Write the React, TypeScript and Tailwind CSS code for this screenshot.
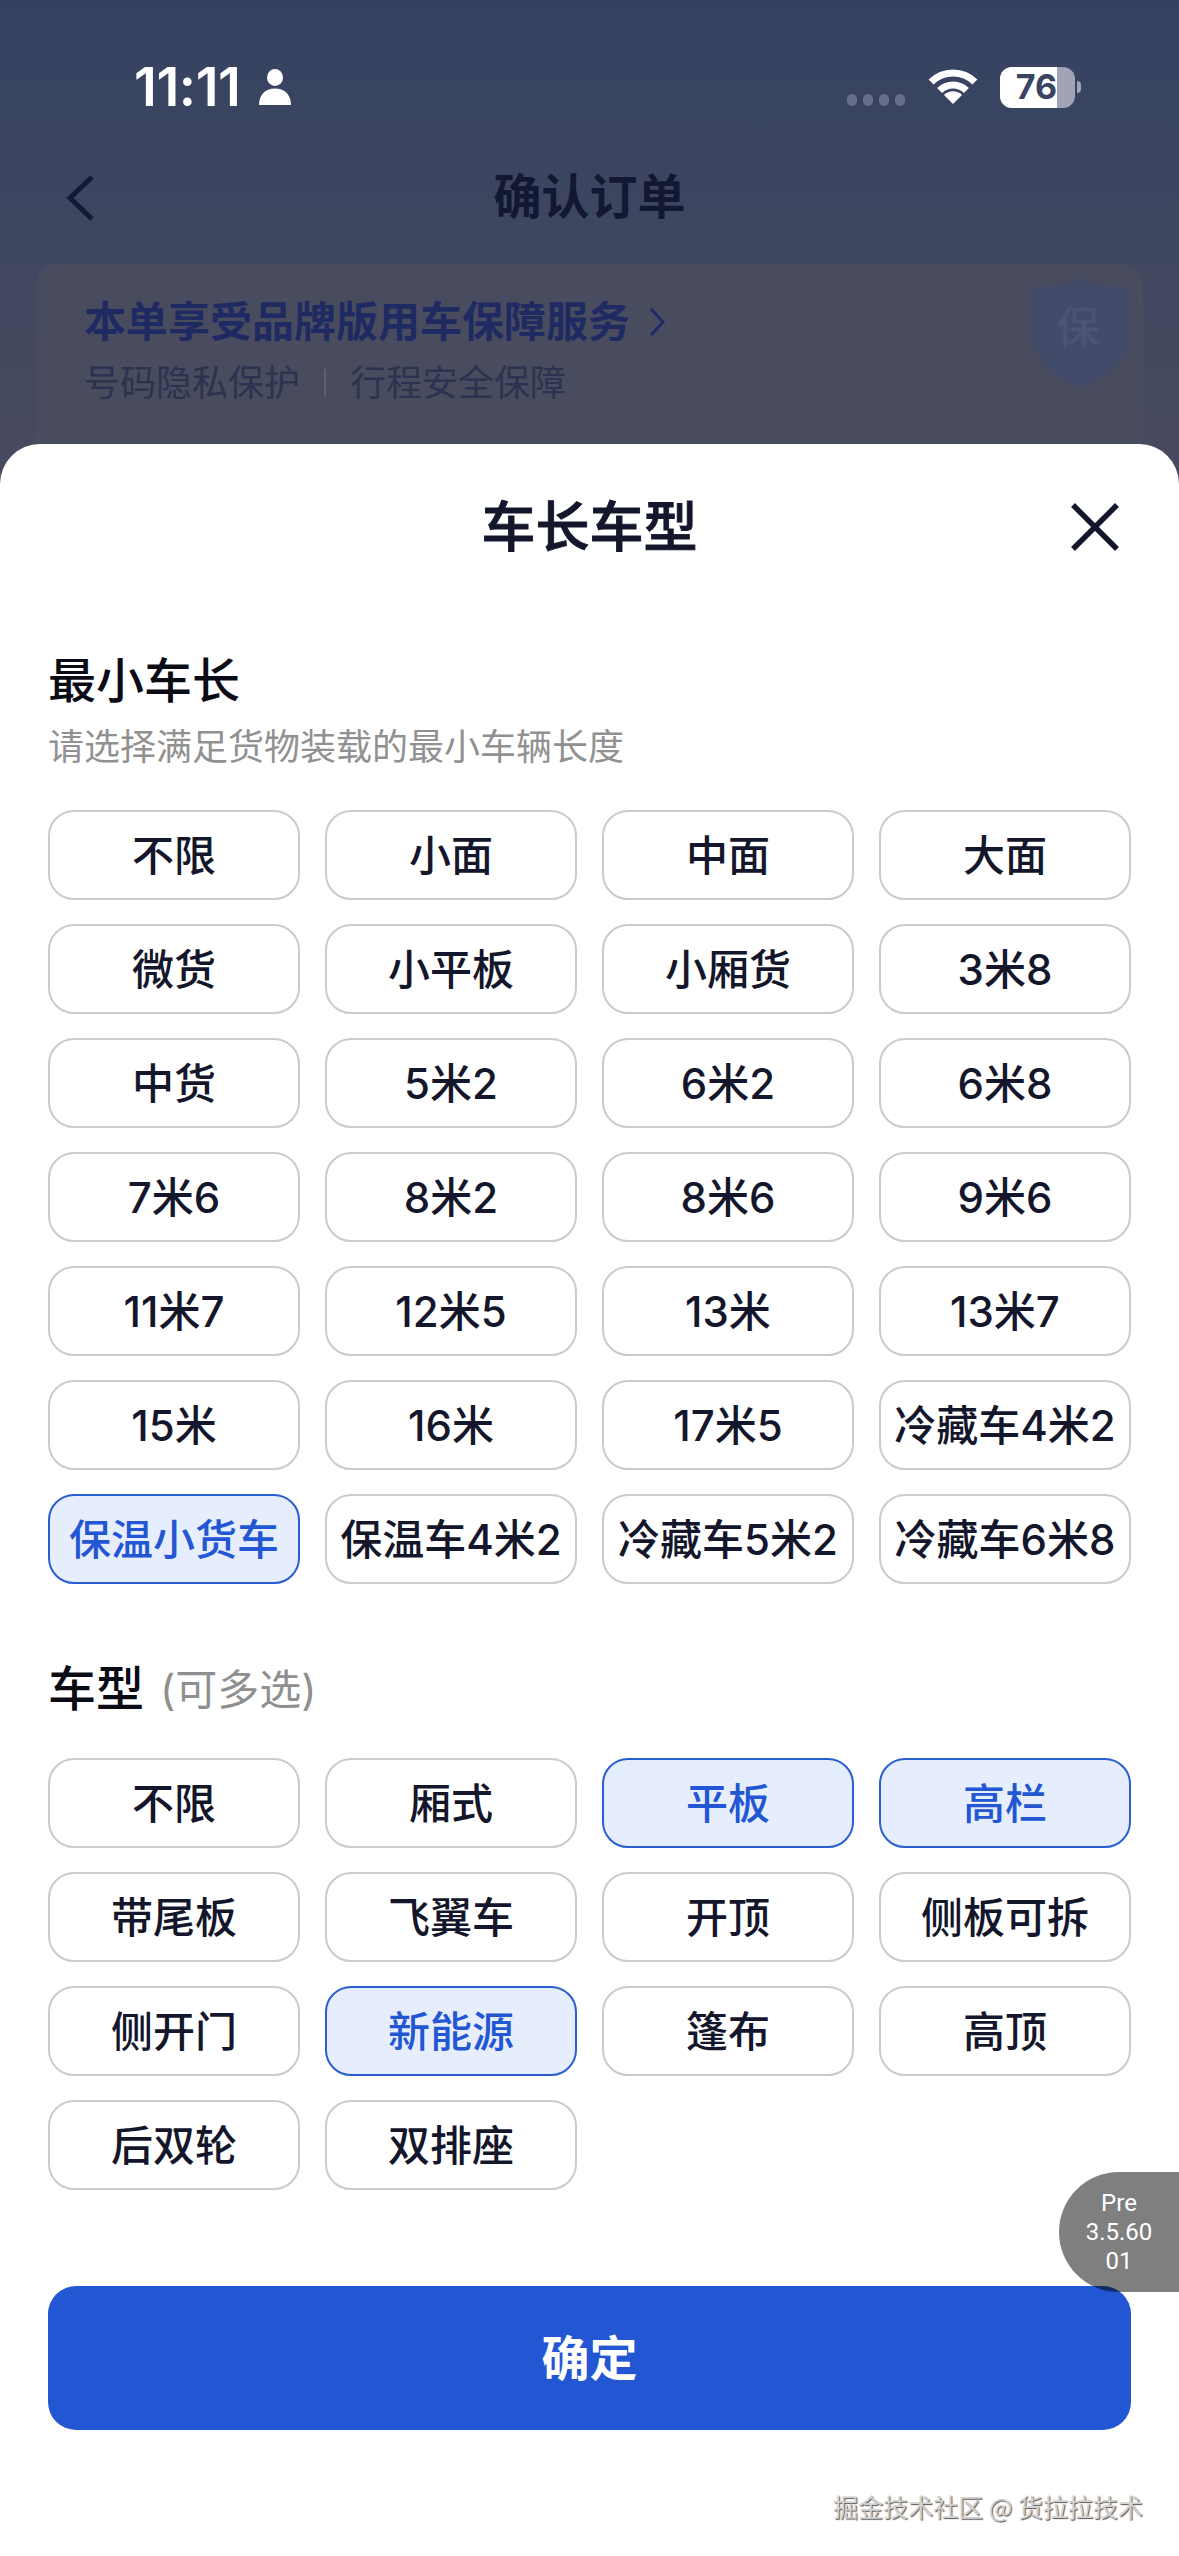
const FONT = "font-['Inter','Noto_Sans_CJK_SC',sans-serif]";

const lengths = [
  "不限", "小面", "中面", "大面",
  "微货", "小平板", "小厢货", "3米8",
  "中货", "5米2", "6米2", "6米8",
  "7米6", "8米2", "8米6", "9米6",
  "11米7", "12米5", "13米", "13米7",
  "15米", "16米", "17米5", "冷藏车4米2",
  "保温小货车", "保温车4米2", "冷藏车5米2", "冷藏车6米8",
];
const lengthSelected = ["保温小货车"];
const types = [
  "不限", "厢式", "平板", "高栏",
  "带尾板", "飞翼车", "开顶", "侧板可拆",
  "侧开门", "新能源", "篷布", "高顶",
  "后双轮", "双排座",
];
const typeSelected = ["平板", "高栏", "新能源"];

function Chip({ label, on }: { label: string; on: boolean }) {
  return (
    <div
      className={
        on
          ? "h-[90px] pt-[2px] rounded-[26px] border-2 border-[#2b5fd1] bg-[#e6edfc] text-[#2356d3] text-[42px] font-medium leading-none flex items-center justify-center whitespace-nowrap"
          : "h-[90px] pt-[2px] rounded-[26px] border-2 border-[#cbcbcb] bg-white text-[#14162b] text-[42px] font-medium leading-none flex items-center justify-center whitespace-nowrap"
      }
    >
      {label}
    </div>
  );
}

function ChipGrid({ items, selected }: { items: string[]; selected: string[] }) {
  return (
    <div className="grid grid-cols-[repeat(4,252px)] gap-x-[25px] gap-y-[24px]">
      {items.map((t, i) => (
        <Chip key={i} label={t} on={selected.includes(t)} />
      ))}
    </div>
  );
}

function Wifi() {
  return (
    <svg className="-mt-[3px]" width="50" height="37" viewBox="0 0 50 37" fill="none">
      <path d="M3.1 15.1A31 31 0 0 1 46.9 15.1" stroke="white" strokeWidth="7" />
      <path d="M11.6 23.6A19 19 0 0 1 38.4 23.6" stroke="white" strokeWidth="7" />
      <path d="M25 37L16 28A12.7 12.7 0 0 1 34 28Z" fill="white" />
    </svg>
  );
}

function Person() {
  return (
    <svg width="32" height="36" viewBox="0 0 32 36" fill="white">
      <ellipse cx="16" cy="8.5" rx="8" ry="8.5" />
      <path d="M0 36C0 26 6 19.5 16 19.5S32 26 32 36Z" />
    </svg>
  );
}

function Shield() {
  return (
    <svg className="blur-[1.5px]" width="98" height="110" viewBox="0 0 98 110">
      <path d="M49 0C62 6 78 9 98 10V52C98 80 76 100 49 110C22 100 0 80 0 52V10C20 9 36 6 49 0Z" fill="#424a6a" />
    </svg>
  );
}

export default function App() {
  return (
    <div className={`relative w-[1179px] h-[2556px] overflow-hidden bg-gradient-to-b from-[#344261] to-[#474a5e] to-[17%] ${FONT}`}>
      {/* status bar */}
      <div className="h-[146px] pl-[134px] pr-[98px] pt-[62px] flex items-start justify-between">
        <div className="flex items-center gap-[18px] text-white h-[50px]">
          <span className="text-[54px] leading-none font-semibold tracking-[-0.4px]">11:11</span>
          <Person />
        </div>
        <div className="flex items-center h-[50px]">
          <div className="flex gap-[6px] mt-[26px] mr-[23px]">
            <span className="w-[10px] h-[12px] rounded-full bg-[#687089]" />
            <span className="w-[10px] h-[12px] rounded-full bg-[#687089]" />
            <span className="w-[10px] h-[12px] rounded-full bg-[#687089]" />
            <span className="w-[10px] h-[12px] rounded-full bg-[#687089]" />
          </div>
          <Wifi />
          <div className="ml-[22px] flex items-center">
            <div className="w-[75px] h-[41px] rounded-[12px] overflow-hidden flex bg-[#a0a4b6]">
              <div className="w-[57px] h-full bg-white flex items-center justify-end">
                <span className="text-[34px] leading-none font-bold text-[#3a4460]">76</span>
              </div>
            </div>
            <div className="ml-[2px] w-[4px] h-[12px] rounded-r-full bg-[#a0a4b6]" />
          </div>
        </div>
      </div>

      {/* page title */}
      <div className="relative h-[102px] flex items-center justify-center">
        <svg className="absolute left-[64px] top-[28px]" width="32" height="48" viewBox="0 0 32 48" fill="none">
          <path d="M28 3L6 24L28 45" stroke="#131a35" strokeWidth="5" />
        </svg>
        <span className="text-[48px] font-bold leading-none text-[#131832]">确认订单</span>
      </div>

      {/* card behind the sheet */}
      <div className="relative mt-[16px] mx-[36px] h-[300px] rounded-[20px] bg-[#494c5e] pl-[48px] pt-[32px]">
        <div className="flex items-center h-[52px]">
          <span className="text-[42px] font-bold leading-none text-[#1f2a63]">本单享受品牌版用车保障服务</span>
          <svg className="ml-[19px]" width="16" height="30" viewBox="0 0 16 30" fill="none">
            <path d="M2 2L14 15L2 28" stroke="#1f2a63" strokeWidth="3" />
          </svg>
        </div>
        <div className="flex items-center h-[50px] mt-[10px] text-[36px] leading-none text-[#2b3350]">
          <span>号码隐私保护</span>
          <span className="mx-[24px] w-[2px] h-[28px] bg-[#5c6072]" />
          <span>行程安全保障</span>
        </div>
        <div className="absolute right-[13px] top-[14px]">
          <Shield />
        </div>
        <span className="absolute right-[43px] top-[42px] text-[44px] leading-none text-[#4f5777] blur-[1px]">保</span>
      </div>

      {/* bottom sheet */}
      <div className="absolute left-0 right-0 top-[444px] h-[2112px] rounded-t-[40px] bg-white px-[48px]">
        <div className="relative h-[166px] pt-[2px] flex items-center justify-center">
          <span className="text-[54px] font-medium [-webkit-text-stroke:0.9px_#14162b] leading-none text-[#14162b]">车长车型</span>
          <svg className="absolute right-[12px] top-[59px]" width="48" height="48" viewBox="0 0 48 48" fill="none">
            <path d="M2 2L46 46M46 2L2 46" stroke="#14162b" strokeWidth="5.5" />
          </svg>
        </div>

        <div className="mt-[38px] h-[64px] pt-[2px] flex items-center text-[48px] font-medium leading-none text-[#0b0b16]">最小车长</div>
        <div className="mt-[11px] h-[48px] flex items-center text-[36px] leading-none text-[#919191]">请选择满足货物装载的最小车辆长度</div>
        <div className="mt-[39px]">
          <ChipGrid items={lengths} selected={lengthSelected} />
        </div>

        <div className="mt-[72px] h-[64px] pt-[2px] flex items-center">
          <span className="text-[48px] font-medium leading-none text-[#0b0b16]">车型</span>
          <span className="ml-[16px] pt-[2px] text-[42px] leading-none text-[#8f8f8f]">(可多选)</span>
        </div>
        <div className="mt-[38px]">
          <ChipGrid items={types} selected={typeSelected} />
        </div>

        <div className="mt-[96px] w-[1083px] h-[144px] pt-[2px] rounded-[28px] bg-[#2356d3] flex items-center justify-center text-[48px] font-bold leading-none text-white">确定</div>
      </div>

      {/* floating version badge */}
      <div className="absolute right-0 top-[2172px] w-[120px] h-[120px] rounded-l-[60px] bg-black/50 flex items-center justify-center text-center text-[24px] leading-[29px] text-white font-['Roboto',sans-serif]">
        <div>
          Pre
          <br />
          3.5.60
          <br />
          01
        </div>
      </div>

      {/* watermark */}
      <div className="absolute right-[36px] top-[2490px] text-[25px] leading-[32px] text-[#d2d2d2] font-['Noto_Sans_CJK_SC',sans-serif] [text-shadow:1px_1px_1px_#555]">
        掘金技术社区 @ 货拉拉技术
      </div>
    </div>
  );
}
